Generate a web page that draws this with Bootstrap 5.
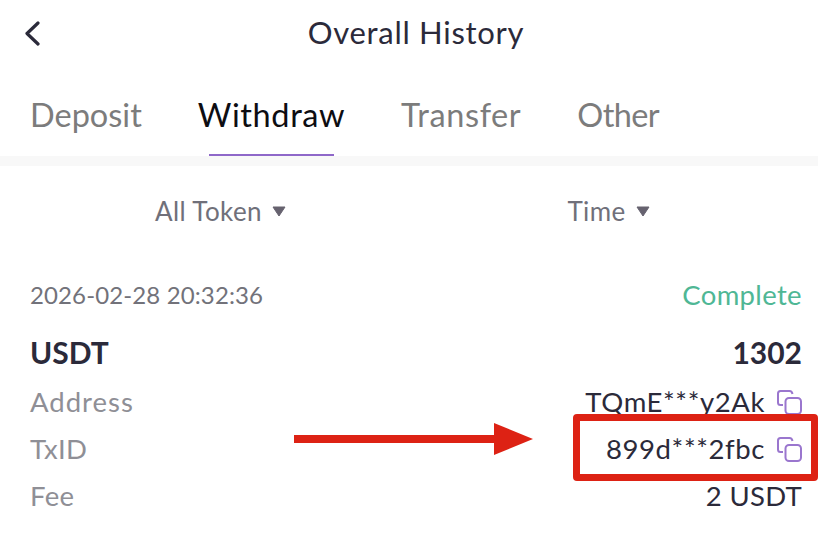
<!DOCTYPE html>
<html lang="en">
<head>
    <meta charset="UTF-8">
    <meta name="viewport" content="width=device-width, initial-scale=1.0">
    <link rel="stylesheet" href="https://cdn.jsdelivr.net/npm/bootstrap@5.3.3/dist/css/bootstrap.min.css">
    <title>Overall History</title>
    <style>
        body {
            font-family: "Lato", "Liberation Sans", sans-serif;
            background-color: #fff;
            color: #2b2a3a;
            overflow: hidden;
        }
        .screen {
            position: relative;
            width: 818px;
            height: 550px;
        }
        .top-bar {
            height: 66px;
            padding-left: 14px;
        }
        .back-btn {
            position: absolute;
            left: 24px;
            top: 21px;
            display: block;
        }
        .page-title {
            font-size: 31px;
            letter-spacing: .7px;
            line-height: 64px;
        }
        .tab-row {
            height: 90px;
            padding-left: 30px;
            gap: 56px;
        }
        .tab-item {
            position: relative;
            font-size: 32.5px;
            line-height: 98px;
            letter-spacing: .6px;
            color: #7c7c7c;
        }
        .tab-item.is-on {
            color: #0d0d12;
        }
        .tab-item.is-on::after {
            content: "";
            position: absolute;
            left: 11px;
            right: 11px;
            bottom: 0;
            height: 2px;
            background-color: #8f68c9;
        }
        .tab-tight {
            letter-spacing: 0;
        }
        .tab-tighter {
            letter-spacing: -.6px;
        }
        .tab-gap {
            height: 10px;
            background-color: #f8f8f8;
        }
        .filter-row {
            height: 90px;
            color: #70707a;
            font-size: 26px;
            letter-spacing: .4px;
        }
        .filter-col {
            width: 50%;
        }
        .filter-token {
            padding-left: 32px;
        }
        .filter-time {
            padding-right: 10px;
        }
        .caret-mark {
            width: 14px;
            height: 11px;
            margin-left: 10px;
        }
        .record-wrap {
            padding: 0 16px 0 30px;
        }
        .date-row {
            height: 63.5px;
            margin-top: 7px;
            font-size: 24px;
            letter-spacing: .12px;
            color: #72727a;
        }
        .status-text {
            font-size: 27.5px;
            letter-spacing: .35px;
            color: #4fb795;
        }
        .coin-row {
            height: 52px;
            font-size: 30px;
            font-weight: 700;
        }
        .info-row {
            height: 47px;
            font-size: 27.5px;
            letter-spacing: .3px;
        }
        .info-label {
            color: #8f8f96;
        }
        .label-wide {
            letter-spacing: 1px;
        }
        .info-value {
            letter-spacing: .6px;
        }
        .copy-mark {
            width: 25px;
            height: 25px;
            margin-left: 12px;
        }
        .red-box {
            position: absolute;
            left: 573px;
            top: 414px;
            width: 245px;
            height: 67px;
            border: 7.5px solid #dd2214;
            border-radius: 4px;
        }
        .red-arrow {
            position: absolute;
            left: 294px;
            top: 423px;
        }
    </style>
</head>
<body>
    <div class="screen">
        <div class="top-bar text-center">
            <svg class="back-btn" width="16" height="25" viewBox="0 0 16 25">
                <path d="M14 2 L3 12.5 L14 23" fill="none" stroke="#2b2a3a" stroke-width="3.2" stroke-linecap="round" stroke-linejoin="round"/>
            </svg>
            <div class="page-title">Overall History</div>
        </div>

        <div class="tab-row d-flex">
            <div class="tab-item tab-tight">Deposit</div>
            <div class="tab-item is-on">Withdraw</div>
            <div class="tab-item">Transfer</div>
            <div class="tab-item tab-tighter">Other</div>
        </div>
        <div class="tab-gap"></div>

        <div class="filter-row d-flex align-items-center">
            <div class="filter-col filter-token d-flex justify-content-center align-items-center">
                All Token
                <svg class="caret-mark" viewBox="0 0 14 11"><path d="M1 1 H13 L7 10 Z" fill="#66626f" stroke="#66626f" stroke-linejoin="round"/></svg>
            </div>
            <div class="filter-col filter-time d-flex justify-content-center align-items-center">
                Time
                <svg class="caret-mark" viewBox="0 0 14 11"><path d="M1 1 H13 L7 10 Z" fill="#66626f" stroke="#66626f" stroke-linejoin="round"/></svg>
            </div>
        </div>

        <div class="record-wrap">
            <div class="date-row d-flex justify-content-between align-items-center">
                <span>2026-02-28 20:32:36</span>
                <span class="status-text">Complete</span>
            </div>
            <div class="coin-row d-flex justify-content-between align-items-center">
                <span>USDT</span>
                <span>1302</span>
            </div>
            <div class="info-row d-flex justify-content-between align-items-center">
                <span class="info-label label-wide">Address</span>
                <span class="info-value d-flex align-items-center">TQmE***y2Ak
                    <svg class="copy-mark" viewBox="0 0 25 25" fill="none" stroke="#9a76ce" stroke-width="2"><path d="M6 15 H3.5 Q1 15 1 12.5 V3.5 Q1 1 3.5 1 H12.5 Q15 1 15.5 4"/><rect x="8.5" y="8" width="15.5" height="16" rx="3.5"/></svg>
                </span>
            </div>
            <div class="info-row d-flex justify-content-between align-items-center">
                <span class="info-label">TxID</span>
                <span class="info-value d-flex align-items-center">899d***2fbc
                    <svg class="copy-mark" viewBox="0 0 25 25" fill="none" stroke="#9a76ce" stroke-width="2"><path d="M6 15 H3.5 Q1 15 1 12.5 V3.5 Q1 1 3.5 1 H12.5 Q15 1 15.5 4"/><rect x="8.5" y="8" width="15.5" height="16" rx="3.5"/></svg>
                </span>
            </div>
            <div class="info-row d-flex justify-content-between align-items-center">
                <span class="info-label">Fee</span>
                <span>2 USDT</span>
            </div>
        </div>

        <div class="red-box"></div>
        <svg class="red-arrow" width="240" height="33" viewBox="0 0 240 33">
            <path d="M0 12 H200 V0 L239 16 L200 32 V20 H0 Z" fill="#dd2214"/>
        </svg>
    </div>
</body>
</html>
